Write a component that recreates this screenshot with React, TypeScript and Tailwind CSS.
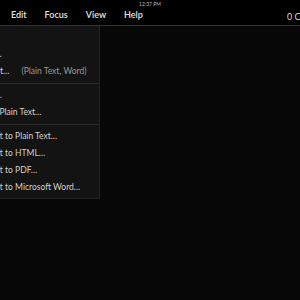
import React from "react";

const font = { fontFamily: "Lato, 'Noto Sans', sans-serif" };

function Item({ label, hint }: { label: string; hint?: string }) {
  return (
    <div className="flex items-center h-[17px] whitespace-nowrap text-[8.5px] text-[#d2d2d2] pl-[16px]">
      <span>{label}</span>
      {hint && <span className="ml-[12px] text-[#9a9a9a]">{hint}</span>}
    </div>
  );
}

function Sep() {
  return <div className="my-[3px] h-px bg-[#2a2a2a]" />;
}

export default function App() {
  return (
    <div className="relative w-[300px] h-[300px] bg-[#070707] overflow-hidden" style={font}>
      <div className="h-[25px] bg-black relative">
        <div className="absolute top-[1px] left-0 right-0 text-center text-[5px] text-[#bbb]">12:37 PM</div>
        <div className="flex items-end h-[21px] pl-[11px] gap-[18px] text-[9px] font-semibold text-[#e2e2e2]">
          <span>Edit</span>
          <span>Focus</span>
          <span>View</span>
          <span>Help</span>
        </div>
        <div className="absolute right-[-37px] top-[10px] text-[9px] text-[#d8d8d8] whitespace-nowrap">0 Characters</div>
      </div>
      <div className="h-px bg-[#333]" />
      <div className="absolute left-[-38px] top-[26px] w-[138px] bg-[#131313] border-r border-b border-[#222] pt-[20px] pb-[2px]">
        <Item label="New…" />
        <Item label="Import…" hint="(Plain Text, Word)" />
        <Sep />
        <Item label="Save…" />
        <Item label="Copy Plain Text…" />
        <Sep />
        <Item label="Export to Plain Text…" />
        <Item label="Export to HTML…" />
        <Item label="Export to PDF…" />
        <Item label="Export to Microsoft Word…" />
      </div>
    </div>
  );
}
